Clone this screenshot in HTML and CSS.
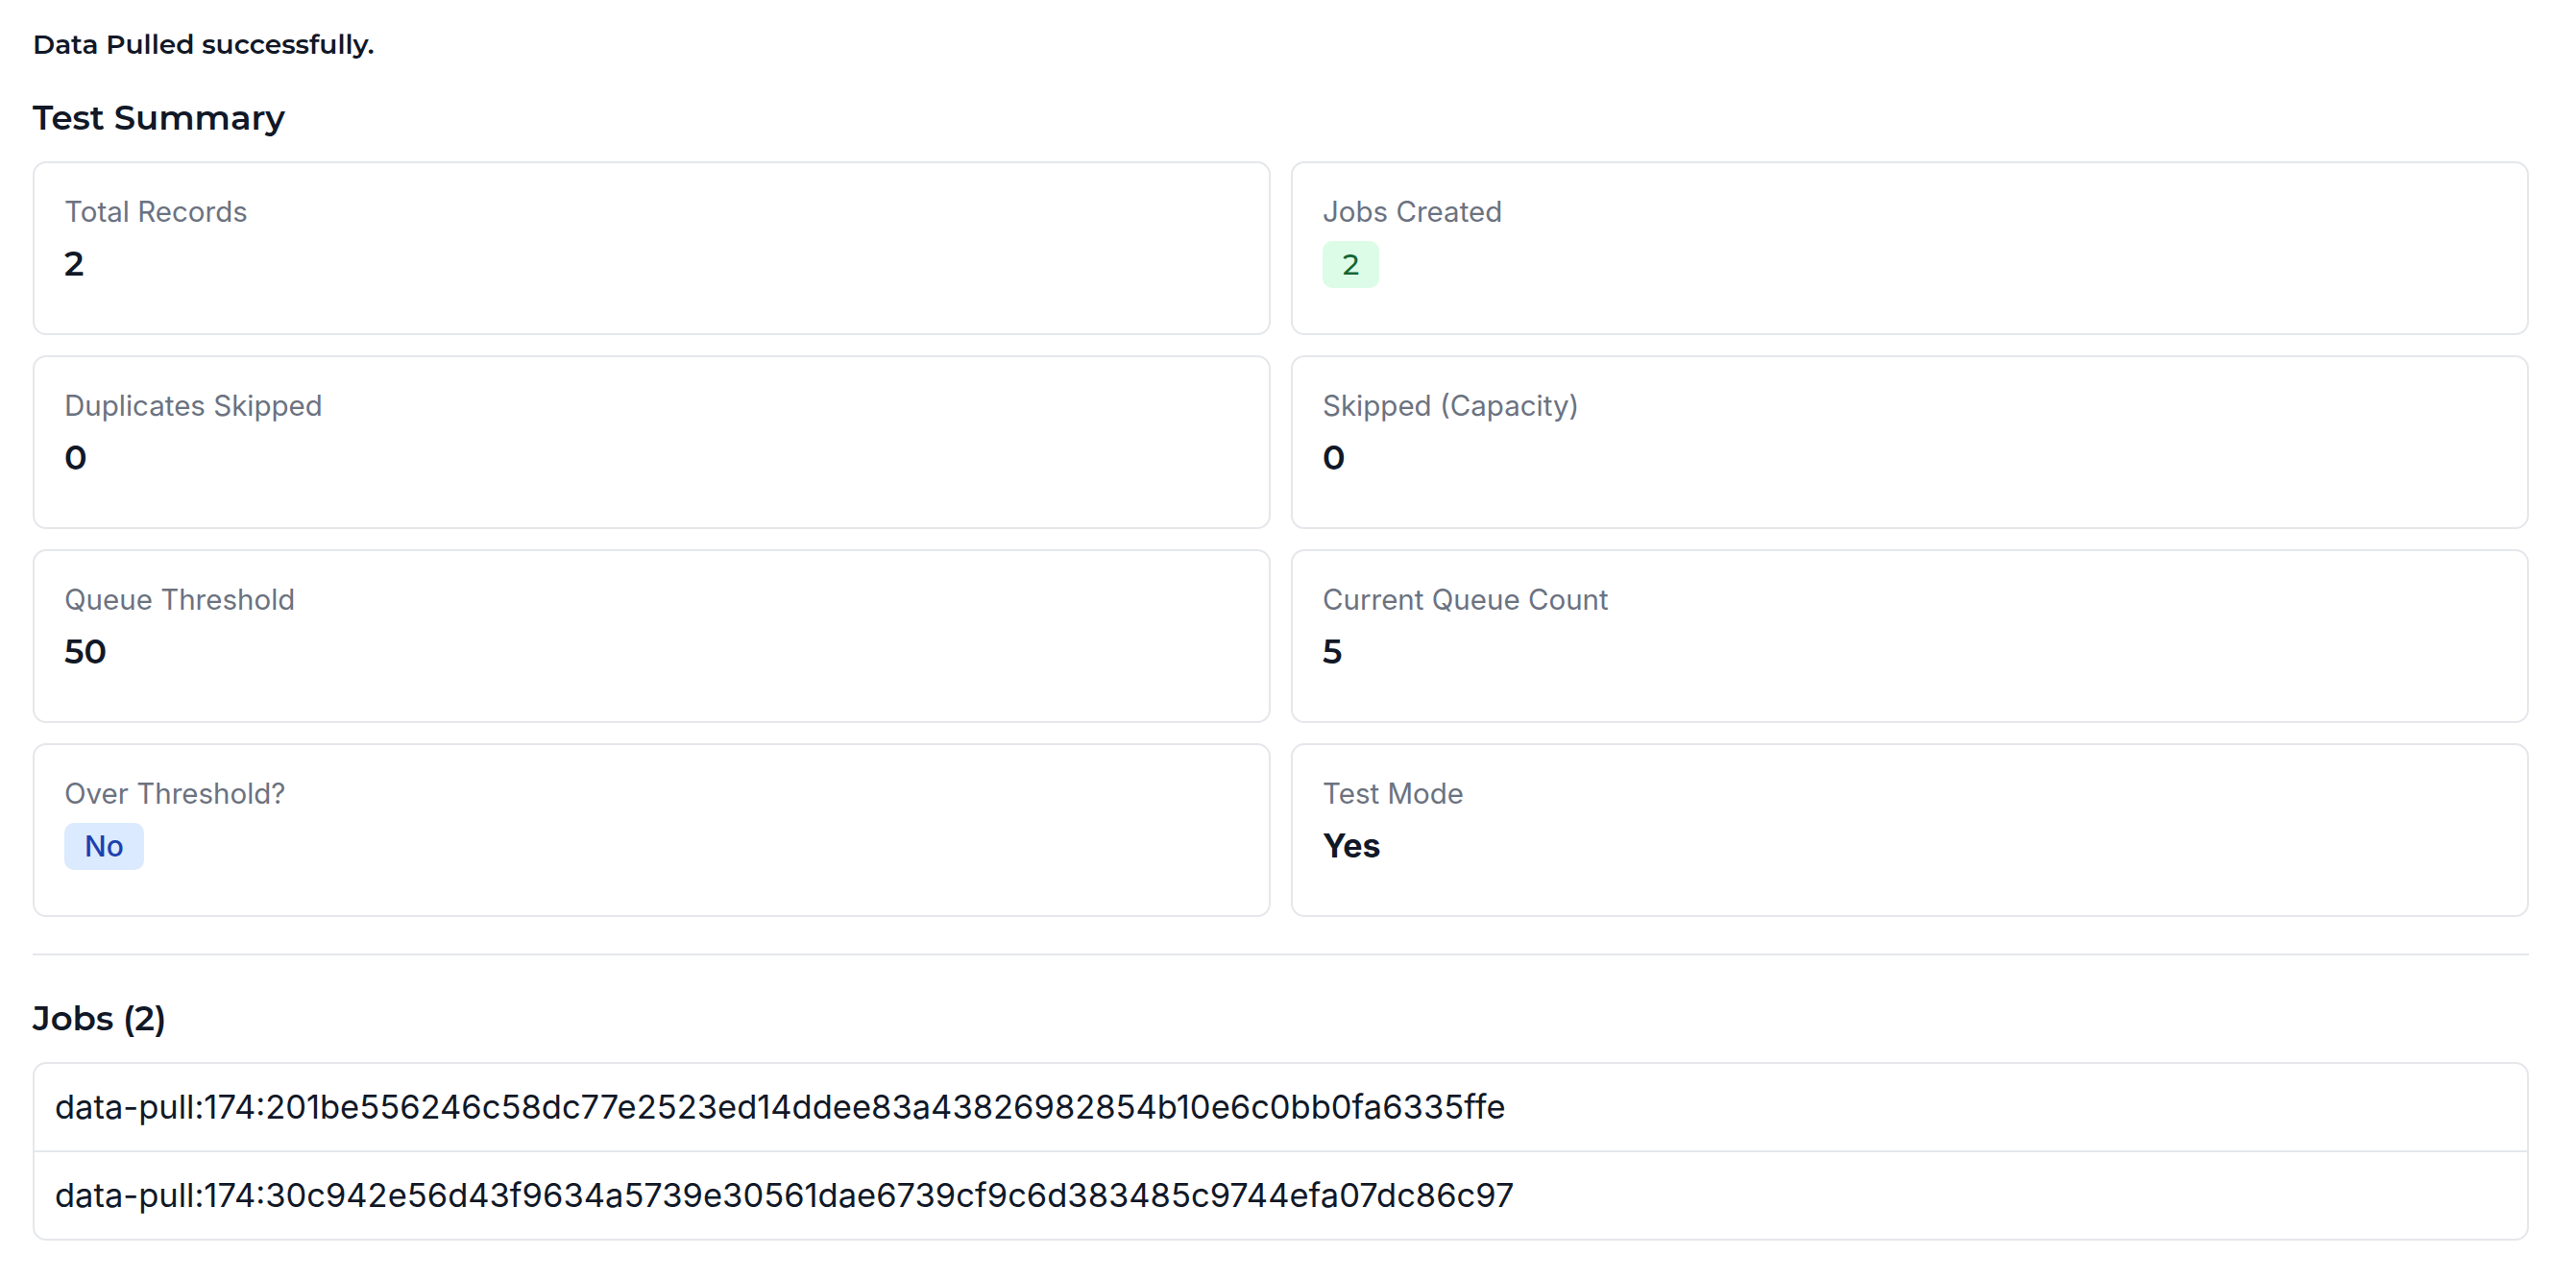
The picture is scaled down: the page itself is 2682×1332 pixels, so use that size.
FILE: index.html
```html
<!DOCTYPE html>
<html lang="en">
<head>
<meta charset="utf-8">
<title>Data Pull Result</title>
<link rel="stylesheet" href="styles.css">
</head>
<body>
<main class="page">
  <p class="status">Data Pulled successfully.</p>

  <h2 class="section-title">Test Summary</h2>
  <div class="stats">
    <div class="stat">
      <div class="stat-label">Total Records</div>
      <div class="stat-value">2</div>
    </div>
    <div class="stat">
      <div class="stat-label">Jobs Created</div>
      <div class="stat-value"><span class="badge badge-green">2</span></div>
    </div>
    <div class="stat">
      <div class="stat-label">Duplicates Skipped</div>
      <div class="stat-value">0</div>
    </div>
    <div class="stat">
      <div class="stat-label">Skipped (Capacity)</div>
      <div class="stat-value">0</div>
    </div>
    <div class="stat">
      <div class="stat-label">Queue Threshold</div>
      <div class="stat-value">50</div>
    </div>
    <div class="stat">
      <div class="stat-label">Current Queue Count</div>
      <div class="stat-value">5</div>
    </div>
    <div class="stat">
      <div class="stat-label">Over Threshold?</div>
      <div class="stat-value"><span class="badge badge-blue">No</span></div>
    </div>
    <div class="stat">
      <div class="stat-label">Test Mode</div>
      <div class="stat-value stat-value-plain">Yes</div>
    </div>
  </div>

  <hr class="divider">

  <h2 class="section-title">Jobs (2)</h2>
  <ul class="jobs">
    <li>data-pull:174:201be556246c58dc77e2523ed14ddee83a43826982854b10e6c0bb0fa6335ffe</li>
    <li>data-pull:174:30c942e56d43f9634a5739e30561dae6739cf9c6d383485c9744efa07dc86c97</li>
  </ul>
</main>
</body>
</html>
```

FILE: styles.css
```css
html, body {
  margin: 0;
  background: #ffffff;
}

body {
  font-family: Inter, "Noto Sans", "Liberation Sans", sans-serif;
  color: #111827;
}

.page {
  padding: 26px 49px 0 34px;
}

/* Headings use the display face */
.status {
  margin: 0;
  font-family: Montserrat, Inter, "Liberation Sans", sans-serif;
  font-weight: 600;
  font-size: 28px;
  line-height: 40px;
  color: #111827;
}

.section-title {
  margin: 33px 0 21px;
  font-family: Montserrat, Inter, "Liberation Sans", sans-serif;
  font-weight: 600;
  font-size: 35.5px;
  line-height: 48px;
  color: #111827;
}

/* Summary grid */
.stats {
  display: grid;
  grid-template-columns: 1fr 1fr;
  gap: 21px 21px;
}

.stat {
  border: 2px solid #e5e7eb;
  border-radius: 14px;
  padding: 30px 31px 48px;
  background: #ffffff;
}

.stat-label {
  font-size: 29.5px;
  line-height: 40px;
  font-weight: 400;
  color: #6b7280;
  margin-bottom: 11px;
}

.stat-value {
  height: 48px;
  font-family: Montserrat, Inter, "Liberation Sans", sans-serif;
  font-weight: 600;
  font-size: 35px;
  line-height: 48px;
  color: #111827;
}

.stat-value-plain {
  font-family: Inter, "Liberation Sans", sans-serif;
  font-weight: 700;
  font-size: 34px;
}

.badge {
  display: inline-flex;
  align-items: center;
  justify-content: center;
  height: 49px;
  padding: 0 21px;
  border-radius: 10px;
  font-family: Inter, "Liberation Sans", sans-serif;
  font-weight: 500;
  font-size: 30px;
  line-height: 49px;
  vertical-align: top;
}

.badge-green {
  background: #dcfce7;
  color: #166534;
  font-family: Montserrat, Inter, "Liberation Sans", sans-serif;
}

.badge-blue {
  background: #dbeafe;
  color: #1e40af;
}

.divider {
  margin: 38px 0 42px;
  border: 0;
  border-top: 2px solid #e5e7eb;
  height: 0;
}

/* Job id list */
.jobs {
  list-style: none;
  margin: 0;
  padding: 0;
  border: 2px solid #e5e7eb;
  border-radius: 14px;
}

.jobs li {
  padding: 24px 21px;
  font-size: 34.5px;
  line-height: 42px;
  color: #111827;
}

.jobs li + li {
  border-top: 2px solid #e5e7eb;
}
```
